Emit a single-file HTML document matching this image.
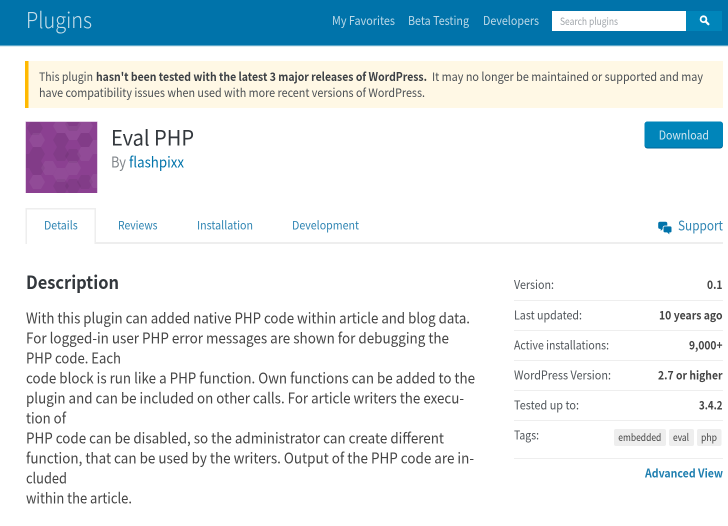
<!DOCTYPE html>
<html lang="en"><head><meta charset="utf-8"><title>Eval PHP</title>
<style>
html,body{margin:0;padding:0;background:#fff;width:728px;height:526px;overflow:hidden}
svg{display:block;filter:blur(.3px)}
text{font-family:"Noto Sans CJK JP","DejaVu Sans","Liberation Sans",sans-serif;font-size:12px;fill:#444}
.n{fill:#bcd9e8}
.s{font-size:11.8px;fill:#50555a}
.v{font-size:11.6px;font-weight:700;fill:#444}
.b{font-size:14.6px;fill:#444}
.t{font-size:10px;fill:#444}
.w{font-size:11.7px;fill:#4a4f54}
.a{font-size:11.6px;fill:#2f85b3}
</style></head><body>
<svg xmlns="http://www.w3.org/2000/svg" width="728" height="526" viewBox="0 0 728 526">
<defs>
<polygon id="h" points="-8,0 -4,-7 4,-7 8,0 4,7 -4,7"/>
<clipPath id="c"><rect x="26" y="122" width="71" height="71"/></clipPath>
</defs>
<rect width="728" height="46" fill="#0073aa"/>
<rect y="45.500" width="728" height="1" fill="#b9d8e6"/>
<text x="26" y="28" style="font-size:22px;fill:#c6deea;font-weight:300" textLength="66" lengthAdjust="spacingAndGlyphs">Plugins</text>
<text x="332" y="25" class="n" textLength="63" lengthAdjust="spacingAndGlyphs">My Favorites</text>
<text x="408" y="25" class="n" textLength="61" lengthAdjust="spacingAndGlyphs">Beta Testing</text>
<text x="483" y="25" class="n" textLength="56" lengthAdjust="spacingAndGlyphs">Developers</text>
<rect x="552" y="11" width="134" height="20" fill="#fff"/>
<text x="560" y="25" style="font-size:10px;fill:#a0a5aa" textLength="58" lengthAdjust="spacingAndGlyphs">Search plugins</text>
<rect x="686" y="11" width="36" height="20" fill="#0085ba"/>
<circle cx="703.500" cy="19.200" r="2.900" fill="none" stroke="#fff" stroke-width="1.800"/>
<path d="M705.600 21.400L708.400 24.200" stroke="#fff" stroke-width="2.200" stroke-linecap="round"/>

<rect x="25" y="61" width="698" height="47" fill="#fff8e5"/>
<rect x="25" y="61" width="3.500" height="47" fill="#ffb900"/>
<text x="39" y="81" class="w" textLength="54" lengthAdjust="spacingAndGlyphs">This plugin</text>
<text x="96" y="81" class="w" style="font-weight:700;fill:#3c4045" textLength="331" lengthAdjust="spacingAndGlyphs">hasn't been tested with the latest 3 major releases of WordPress.</text>
<text x="432" y="81" class="w" textLength="271" lengthAdjust="spacingAndGlyphs">It may no longer be maintained or supported and may</text>
<text x="39" y="97" class="w" textLength="386" lengthAdjust="spacingAndGlyphs">have compatibility issues when used with more recent versions of WordPress.</text>

<rect x="25.500" y="121.500" width="72" height="71.500" fill="#c9a2cc"/>
<rect x="26" y="122" width="71" height="71" fill="#8b4091"/>
<g clip-path="url(#c)">
<g fill="#000" fill-opacity=".06">
<use href="#h" x="35" y="128"/><use href="#h" x="61" y="140"/><use href="#h" x="61" y="154"/><use href="#h" x="73" y="124"/><use href="#h" x="85" y="140"/><use href="#h" x="73" y="156"/><use href="#h" x="61" y="186"/><use href="#h" x="37" y="154"/><use href="#h" x="25" y="161"/><use href="#h" x="37" y="168"/><use href="#h" x="85" y="182"/><use href="#h" x="73" y="186"/>
</g>
<g fill="#fff" fill-opacity=".06">
<use href="#h" x="37" y="140"/><use href="#h" x="49" y="168"/><use href="#h" x="61" y="175"/><use href="#h" x="73" y="133"/><use href="#h" x="85" y="126"/><use href="#h" x="85" y="154"/><use href="#h" x="97" y="147"/><use href="#h" x="97" y="181"/><use href="#h" x="37" y="182"/><use href="#h" x="61" y="126"/><use href="#h" x="73" y="168"/>
</g>
</g>
<text x="111" y="145.500" style="font-size:21px;fill:#32373c" textLength="83" lengthAdjust="spacingAndGlyphs">Eval PHP</text>
<text x="111" y="167.500" style="font-size:14.600px;fill:#82878c" textLength="15" lengthAdjust="spacingAndGlyphs">By</text>
<text x="129" y="167.500" style="font-size:14.600px;fill:#0073aa" textLength="55" lengthAdjust="spacingAndGlyphs">flashpixx</text>

<rect x="644.500" y="121.500" width="78.500" height="27" rx="3" fill="#006799"/>
<rect x="644.500" y="121.500" width="78.500" height="26" rx="3" fill="#0085ba"/>
<text x="658.700" y="139.500" style="font-size:12px;fill:#d2e7f1" textLength="50.300" lengthAdjust="spacingAndGlyphs">Download</text>

<rect x="26" y="242" width="697" height="2" fill="#eee"/>
<rect x="25.500" y="208" width="70.500" height="36" fill="#eee"/>
<rect x="27" y="209.500" width="67.500" height="35" fill="#fff"/>
<text x="44" y="229.500" class="a" textLength="33.700" lengthAdjust="spacingAndGlyphs">Details</text>
<text x="118" y="229.500" class="a" textLength="39.500" lengthAdjust="spacingAndGlyphs">Reviews</text>
<text x="197" y="229.500" class="a" textLength="56" lengthAdjust="spacingAndGlyphs">Installation</text>
<text x="292" y="229.500" class="a" textLength="67" lengthAdjust="spacingAndGlyphs">Development</text>
<path d="M660 221.800h5.500a1.800 1.800 0 0 1 1.800 1.800v3.500a1.800 1.800 0 0 1-1.800 1.800h-2.500l-2.300 2v-2h-.7a1.800 1.800 0 0 1-1.800-1.800v-3.500a1.800 1.800 0 0 1 1.800-1.800z" fill="#0073aa"/>
<path d="M664.800 226h5.400a1.700 1.700 0 0 1 1.700 1.700v3.400a1.700 1.700 0 0 1-1.700 1.700h-.5v2.500l-2.700-2.500h-2.200a1.700 1.700 0 0 1-1.700-1.700v-3.400a1.700 1.700 0 0 1 1.700-1.700z" fill="#0073aa" stroke="#fff" stroke-width=".8"/>
<text x="678" y="230.500" style="font-size:13.300px;fill:#2f85b3" textLength="45" lengthAdjust="spacingAndGlyphs">Support</text>

<text x="26" y="289" style="font-size:18px;font-weight:700;fill:#32373c" textLength="93" lengthAdjust="spacingAndGlyphs">Description</text>
<text x="26" y="323.500" class="b" textLength="444" lengthAdjust="spacingAndGlyphs">With this plugin can added native PHP code within article and blog data.</text>
<text x="26" y="343.500" class="b" textLength="423" lengthAdjust="spacingAndGlyphs">For logged-in user PHP error messages are shown for debugging the</text>
<text x="26" y="363.500" class="b" textLength="95" lengthAdjust="spacingAndGlyphs">PHP code. Each</text>
<text x="26" y="383.500" class="b" textLength="449" lengthAdjust="spacingAndGlyphs">code block is run like a PHP function. Own functions can be added to the</text>
<text x="26" y="403.500" class="b" textLength="438" lengthAdjust="spacingAndGlyphs">plugin and can be included on other calls. For article writers the execu-</text>
<text x="26" y="423.500" class="b" textLength="40" lengthAdjust="spacingAndGlyphs">tion of</text>
<text x="26" y="443.500" class="b" textLength="418" lengthAdjust="spacingAndGlyphs">PHP code can be disabled, so the administrator can create different</text>
<text x="26" y="463.500" class="b" textLength="448" lengthAdjust="spacingAndGlyphs">function, that can be used by the writers. Output of the PHP code are in-</text>
<text x="26" y="483.500" class="b" textLength="41" lengthAdjust="spacingAndGlyphs">cluded</text>
<text x="26" y="503.500" class="b" textLength="106" lengthAdjust="spacingAndGlyphs">within the article.</text>

<text x="514" y="289" class="s" textLength="40" lengthAdjust="spacingAndGlyphs">Version:</text>
<text x="707" y="289" class="v" textLength="15.500" lengthAdjust="spacingAndGlyphs">0.1</text>
<rect x="514" y="300" width="209" height="1" fill="#eee"/>
<text x="514" y="319.500" class="s" textLength="68" lengthAdjust="spacingAndGlyphs">Last updated:</text>
<text x="659" y="319.500" class="v" textLength="63.500" lengthAdjust="spacingAndGlyphs">10 years ago</text>
<rect x="514" y="330" width="209" height="1" fill="#eee"/>
<text x="514" y="349.500" class="s" textLength="95" lengthAdjust="spacingAndGlyphs">Active installations:</text>
<text x="689" y="349.500" class="v" textLength="33.500" lengthAdjust="spacingAndGlyphs">9,000+</text>
<rect x="514" y="360" width="209" height="1" fill="#eee"/>
<text x="514" y="379.500" class="s" textLength="97" lengthAdjust="spacingAndGlyphs">WordPress Version:</text>
<text x="658" y="379.500" class="v" textLength="64.500" lengthAdjust="spacingAndGlyphs">2.7 or higher</text>
<rect x="514" y="390" width="209" height="1" fill="#eee"/>
<text x="514" y="409.500" class="s" textLength="65" lengthAdjust="spacingAndGlyphs">Tested up to:</text>
<text x="699" y="409.500" class="v" textLength="23.500" lengthAdjust="spacingAndGlyphs">3.4.2</text>
<rect x="514" y="420" width="209" height="1" fill="#eee"/>
<text x="514" y="439.500" class="s" textLength="25" lengthAdjust="spacingAndGlyphs">Tags:</text>
<rect x="614" y="429" width="52" height="17" rx="2" fill="#eee"/>
<rect x="669" y="429" width="25" height="17" rx="2" fill="#eee"/>
<rect x="697" y="429" width="24.500" height="17" rx="2" fill="#eee"/>
<text x="618.300" y="441" class="t" textLength="43" lengthAdjust="spacingAndGlyphs">embedded</text>
<text x="673" y="441" class="t" textLength="16" lengthAdjust="spacingAndGlyphs">eval</text>
<text x="701" y="441" class="t" textLength="16" lengthAdjust="spacingAndGlyphs">php</text>
<rect x="514" y="458" width="209" height="1" fill="#eee"/>
<text x="645" y="477.500" style="font-size:11.700px;font-weight:700;fill:#1f7fb0" textLength="78" lengthAdjust="spacingAndGlyphs">Advanced View</text>
</svg>
</body></html>
